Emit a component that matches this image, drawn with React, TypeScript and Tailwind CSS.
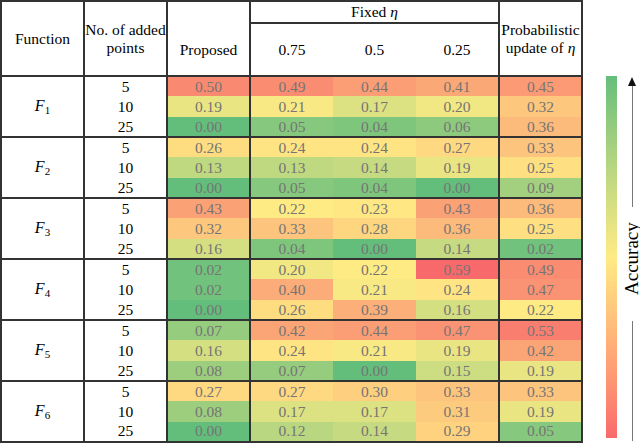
import React from "react";

type Group = { f: string; rows: [number, number[]][] };

const groups: Group[] = [
  { f: "1", rows: [[5, [0.5, 0.49, 0.44, 0.41, 0.45]], [10, [0.19, 0.21, 0.17, 0.2, 0.32]], [25, [0.0, 0.05, 0.04, 0.06, 0.36]]] },
  { f: "2", rows: [[5, [0.26, 0.24, 0.24, 0.27, 0.33]], [10, [0.13, 0.13, 0.14, 0.19, 0.25]], [25, [0.0, 0.05, 0.04, 0.0, 0.09]]] },
  { f: "3", rows: [[5, [0.43, 0.22, 0.23, 0.43, 0.36]], [10, [0.32, 0.33, 0.28, 0.36, 0.25]], [25, [0.16, 0.04, 0.0, 0.14, 0.02]]] },
  { f: "4", rows: [[5, [0.02, 0.2, 0.22, 0.59, 0.49]], [10, [0.02, 0.4, 0.21, 0.24, 0.47]], [25, [0.0, 0.26, 0.39, 0.16, 0.22]]] },
  { f: "5", rows: [[5, [0.07, 0.42, 0.44, 0.47, 0.53]], [10, [0.16, 0.24, 0.21, 0.19, 0.42]], [25, [0.08, 0.07, 0.0, 0.15, 0.19]]] },
  { f: "6", rows: [[5, [0.27, 0.27, 0.3, 0.33, 0.33]], [10, [0.08, 0.17, 0.17, 0.31, 0.19]], [25, [0.0, 0.12, 0.14, 0.29, 0.05]]] },
];

// excel-style green / yellow / red scale, midpoint at the median
const GREEN = [99, 190, 123];
const YELLOW = [255, 235, 132];
const RED = [248, 105, 107];

function heat(v: number) {
  const mid = 0.22;
  const max = 0.59;
  let a: number[], b: number[], t: number;
  if (v <= mid) {
    a = GREEN;
    b = YELLOW;
    t = v / mid;
  } else {
    a = YELLOW;
    b = RED;
    t = (v - mid) / (max - mid);
  }
  const c = a.map((x, i) => Math.round(x + (b[i] - x) * t));
  return `rgb(${c[0]},${c[1]},${c[2]})`;
}

function Eta() {
  return <i>η</i>;
}

export default function App() {
  return (
    <div className="w-[640px] h-[445px] bg-white flex [font-family:'Liberation_Serif',serif] text-black overflow-hidden">
      <table className="w-[583px] h-[442px] table-fixed border-collapse border-2 border-[#333] text-[15.5px] [font-family:'Liberation_Serif',serif] [&_td]:border-[#333] [&_th]:border-[#333]">
        <colgroup>
          {Array.from({ length: 7 }).map((_, i) => (
            <col key={i} className="w-[83px]" />
          ))}
        </colgroup>
        <thead>
          <tr className="h-[22px]">
            <th rowSpan={2} className="font-normal border-r-2 border-b-2 leading-[18px]">
              Function
            </th>
            <th rowSpan={2} className="font-normal border-r-2 border-b-2 leading-[18px] whitespace-nowrap">
              No. of added
              <br />
              points
            </th>
            <th rowSpan={2} className="font-normal border-r-2 border-b-2 pt-[22px] leading-[18px]">
              Proposed
            </th>
            <th colSpan={3} className="font-normal border-b-2 border-r-2 leading-[18px]">
              Fixed <Eta />
            </th>
            <th rowSpan={2} className="font-normal border-b-2 leading-[18px] whitespace-nowrap">
              Probabilistic
              <br />
              update of <Eta />
            </th>
          </tr>
          <tr className="h-[53px]">
            <th className="font-normal border-b-2">0.75</th>
            <th className="font-normal border-b-2">0.5</th>
            <th className="font-normal border-b-2 border-r-2">0.25</th>
          </tr>
        </thead>
        <tbody>
          {groups.map((g, gi) =>
            g.rows.map(([n, vals], ri) => (
              <tr key={`${gi}-${ri}`} className={`h-[20.33px] ${ri === 0 && gi > 0 ? "border-t-2 border-[#333]" : ""}`}>
                {ri === 0 && (
                  <td rowSpan={3} className="border-r-2 text-center align-middle text-[16px]">
                    <i>F</i>
                    <sub className="text-[11px]">{g.f}</sub>
                  </td>
                )}
                <td className="border-r-2 text-center leading-none">{n}</td>
                {vals.map((v, vi) => (
                  <td
                    key={vi}
                    className={`text-center leading-none text-[#757575] ${vi === 0 || vi === 3 ? "border-r-2" : ""}`}
                    style={{ backgroundColor: heat(v) }}
                  >
                    {v.toFixed(2)}
                  </td>
                ))}
              </tr>
            ))
          )}
        </tbody>
      </table>

      {/* colour bar */}
      <div className="ml-[23px] mt-[76px] w-[11px] h-[362px] bg-gradient-to-b from-[#63be7b] via-[#ffeb84] to-[#f8696b]" />

      {/* accuracy arrow */}
      <div className="ml-[7px] w-[16px] mt-[77px] flex flex-col items-center">
        <svg width="8" height="9" viewBox="0 0 8 9" className="block">
          <polygon points="4,0 8,9 0,9" fill="#111" />
        </svg>
        <div className="w-px h-[121px] bg-[#777]" />
        <div className="mt-[12px] h-[80px] flex items-center justify-center [writing-mode:vertical-rl] rotate-180 text-[19px] leading-[16px] whitespace-nowrap">
          Accuracy
        </div>
        <div className="mt-[22px] w-px h-[120px] bg-[#777]" />
      </div>
    </div>
  );
}
